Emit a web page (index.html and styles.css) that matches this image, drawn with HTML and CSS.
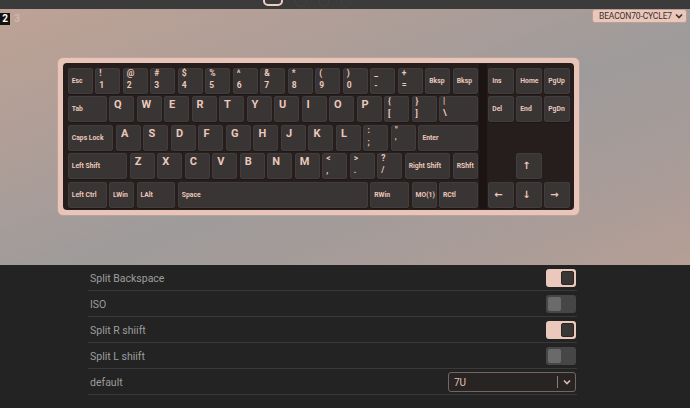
FILE: index.html
```html
<!DOCTYPE html>
<html>
<head>
<meta charset="utf-8">
<title>Keyboard</title>
<link rel="stylesheet" href="styles.css">
</head>
<body>
<div class="topbar">
  <div class="tb-icon tb-active"></div>
  <div class="tb-icon tb-dim"></div>
  <div class="tb-icon tb-dim tb-small"></div>
  <div class="tb-icon tb-dim tb-small"></div>
</div>
<div class="stage">
  <div class="stage-head">
    <div class="layers"><span class="layer on">2</span><span class="layer">3</span></div>
    <div class="kb-select"><span>BEACON70-CYCLE7</span><svg class="chev" viewBox="0 0 8 6" width="8" height="6"><path d="M1 1.5 L4 4.5 L7 1.5" fill="none" stroke="#3d302c" stroke-width="1.6"/></svg></div>
  </div>
  <div class="case">
    <div class="plate">
      <div class="main">
        <div class="row">
          <div class="k mod">Esc</div>
          <div class="k dual"><span>!</span><span>1</span></div>
          <div class="k dual"><span>@</span><span>2</span></div>
          <div class="k dual"><span>#</span><span>3</span></div>
          <div class="k dual"><span>$</span><span>4</span></div>
          <div class="k dual"><span>%</span><span>5</span></div>
          <div class="k dual"><span>^</span><span>6</span></div>
          <div class="k dual"><span>&amp;</span><span>7</span></div>
          <div class="k dual"><span>*</span><span>8</span></div>
          <div class="k dual"><span>(</span><span>9</span></div>
          <div class="k dual"><span>)</span><span>0</span></div>
          <div class="k dual"><span>_</span><span>-</span></div>
          <div class="k dual"><span>+</span><span>=</span></div>
          <div class="k mod">Bksp</div>
          <div class="k mod">Bksp</div>
        </div>
        <div class="row">
          <div class="k mod w15">Tab</div>
          <div class="k alpha">Q</div>
          <div class="k alpha">W</div>
          <div class="k alpha">E</div>
          <div class="k alpha">R</div>
          <div class="k alpha">T</div>
          <div class="k alpha">Y</div>
          <div class="k alpha">U</div>
          <div class="k alpha">I</div>
          <div class="k alpha">O</div>
          <div class="k alpha">P</div>
          <div class="k dual"><span>{</span><span>[</span></div>
          <div class="k dual"><span>}</span><span>]</span></div>
          <div class="k dual w15"><span>|</span><span>\</span></div>
        </div>
        <div class="row">
          <div class="k mod w175">Caps Lock</div>
          <div class="k alpha">A</div>
          <div class="k alpha">S</div>
          <div class="k alpha">D</div>
          <div class="k alpha">F</div>
          <div class="k alpha">G</div>
          <div class="k alpha">H</div>
          <div class="k alpha">J</div>
          <div class="k alpha">K</div>
          <div class="k alpha">L</div>
          <div class="k dual"><span>:</span><span>;</span></div>
          <div class="k dual"><span>"</span><span>'</span></div>
          <div class="k mod w225">Enter</div>
        </div>
        <div class="row">
          <div class="k mod w225">Left Shift</div>
          <div class="k alpha">Z</div>
          <div class="k alpha">X</div>
          <div class="k alpha">C</div>
          <div class="k alpha">V</div>
          <div class="k alpha">B</div>
          <div class="k alpha">N</div>
          <div class="k alpha">M</div>
          <div class="k dual"><span>&lt;</span><span>,</span></div>
          <div class="k dual"><span>&gt;</span><span>.</span></div>
          <div class="k dual"><span>?</span><span>/</span></div>
          <div class="k mod w175">Right Shift</div>
          <div class="k mod">RShft</div>
        </div>
        <div class="row">
          <div class="k mod w15">Left Ctrl</div>
          <div class="k mod">LWin</div>
          <div class="k mod w15">LAlt</div>
          <div class="k mod w7">Space</div>
          <div class="k mod w15">RWin</div>
          <div class="k mod">MO(1)</div>
          <div class="k mod w15">RCtl</div>
        </div>
      </div>
      <div class="sep"></div>
      <div class="nav">
        <div class="row">
          <div class="k mod">Ins</div>
          <div class="k mod">Home</div>
          <div class="k mod">PgUp</div>
        </div>
        <div class="row">
          <div class="k mod">Del</div>
          <div class="k mod">End</div>
          <div class="k mod">PgDn</div>
        </div>
        <div class="row"></div>
        <div class="row">
          <div class="gap1"></div>
          <div class="k mod arrow">↑</div>
        </div>
        <div class="row">
          <div class="k mod arrow">←</div>
          <div class="k mod arrow">↓</div>
          <div class="k mod arrow">→</div>
        </div>
      </div>
    </div>
  </div>
</div>
<div class="panel">
  <div class="opt"><span class="opt-label">Split Backspace</span><span class="toggle on"><span class="knob"></span></span></div>
  <div class="opt"><span class="opt-label">ISO</span><span class="toggle"><span class="knob"></span></span></div>
  <div class="opt"><span class="opt-label">Split R shiift</span><span class="toggle on"><span class="knob"></span></span></div>
  <div class="opt"><span class="opt-label">Split L shiift</span><span class="toggle"><span class="knob"></span></span></div>
  <div class="opt"><span class="opt-label">default</span>
    <span class="select"><span class="sel-val">7U</span><span class="sel-div"></span><svg class="sel-chev" viewBox="0 0 8 6" width="8" height="6"><path d="M1 1.5 L4 4.5 L7 1.5" fill="none" stroke="#d9bcb0" stroke-width="1.6"/></svg></span>
  </div>
</div>
</body>
</html>
```
FILE: styles.css
```css
* { box-sizing: border-box; }
html, body {
  margin: 0;
  padding: 0;
}
body {
  width: 690px;
  height: 408px;
  overflow: hidden;
  background: #232323;
  font-family: Roboto, "Noto Sans", sans-serif;
}

.topbar {
  height: 9px;
  background: #3b3b3b;
  display: flex;
  align-items: flex-end;
  padding-left: 263px;
  gap: 12px;
  overflow: hidden;
}
.tb-icon {
  flex: none;
  margin-bottom: 3px;
}
.tb-active {
  width: 20px;
  height: 16px;
  border: 2px solid #efcdc0;
  border-radius: 5px;
}
.tb-dim {
  width: 12px;
  height: 12px;
  border: 1.5px solid #434343;
  border-radius: 50%;
  margin-bottom: 2px;
}
.tb-small { width: 10px; height: 10px; }

.stage {
  height: 256px;
  background: linear-gradient(to bottom right, #bea295 0%, #ab9d98 35%, #9e9b9b 55%, #a99c98 80%, #b59e95 100%);
}
.stage-head {
  display: flex;
  justify-content: space-between;
  align-items: flex-start;
  height: 17px;
}
.layers {
  display: flex;
  margin-top: 4px;
  font-size: 10px;
  font-weight: 700;
  line-height: 12px;
}
.layer {
  width: 10px;
  height: 12px;
  text-align: center;
  color: #cdb9b1;
  margin-right: 2px;
}
.layer.on {
  background: #121212;
  color: #ffffff;
}
.kb-select {
  margin-right: 3px;
  height: 14px;
  padding: 0 3px 0 6px;
  background: #e9c7ba;
  border: 1px solid #b8a097;
  border-radius: 3px;
  display: flex;
  align-items: center;
  gap: 3px;
  white-space: nowrap;
  font-size: 8.5px;
  letter-spacing: -0.15px;
  color: #3d302c;
}
.chev { display: block; flex: none; }

.case {
  margin: 32px 0 0 58px;
  width: 521px;
  padding: 5px;
  background: #e8c5b8;
  border-radius: 5px;
  box-shadow: 0 0 0 0.5px #c9a99c;
}
.plate {
  display: flex;
  background: #261e1d;
  border-radius: 4px;
  padding: 3.5px 2px 0.5px 3.5px;
}
.main { --u: 27.5px; width: 412.5px; }
.sep {
  width: 8px;
  background: #1b1413;
  margin: -3px 0 0 0;
}
.nav { --u: 28px; width: 84px; }
.row {
  display: flex;
  height: 28.5px;
}
.k {
  --w: 1;
  width: calc(var(--w) * var(--u) - 2.5px);
  height: 26px;
  margin: 1.25px;
  flex: none;
  background: #393534;
  border-radius: 3px;
  box-shadow: inset 0 0 0 1px #423d3c, 0 1px 0 #1d1616;
  color: #ebc8bb;
  font-weight: 700;
  padding-left: 4px;
  display: flex;
  flex-direction: column;
  overflow: hidden;
  white-space: nowrap;
}
.w15 { --w: 1.5; }
.w175 { --w: 1.75; }
.w225 { --w: 2.25; }
.w7 { --w: 7; }
.gap1 { width: 28px; flex: none; }

.mod {
  justify-content: center;
  font-size: 6.8px;
  line-height: 8px;
}
.arrow {
  font-family: "DejaVu Sans", sans-serif;
  font-size: 10px;
  line-height: 10px;
  padding-left: 6px;
}
.alpha {
  font-size: 11px;
  line-height: 11px;
  padding-top: 3px;
  padding-left: 5px;
}
.dual {
  justify-content: center;
  font-size: 8.5px;
  line-height: 12px;
  padding-bottom: 4px;
}

.panel {
  width: 489px;
  margin-left: 88px;
}
.opt {
  height: 26px;
  border-bottom: 1px solid #393939;
  display: flex;
  align-items: center;
  justify-content: space-between;
  padding: 1px 1px 0 2px;
}
.opt-label {
  font-size: 10.5px;
  color: #9d9d9d;
}
.toggle {
  width: 30px;
  height: 18px;
  border-radius: 3px;
  background: #464646;
  display: flex;
  align-items: center;
  padding: 0 2px;
}
.knob {
  width: 13px;
  height: 14px;
  border-radius: 2px;
  background: #6a6a6a;
}
.toggle.on {
  background: #eac8bb;
  justify-content: flex-end;
}
.toggle.on .knob {
  background: #3a3635;
  border: 1px solid #2a2524;
}
.select {
  width: 128px;
  height: 20px;
  border: 1.5px solid #736660;
  border-radius: 3px;
  background: #272423;
  display: flex;
  align-items: center;
  padding: 0 4px 0 5px;
}
.sel-val {
  flex: 1;
  font-size: 10px;
  color: #e2c2b6;
}
.sel-div {
  width: 1px;
  height: 12px;
  background: #8a7c76;
  margin-right: 5px;
}
.sel-chev { display: block; }
```
